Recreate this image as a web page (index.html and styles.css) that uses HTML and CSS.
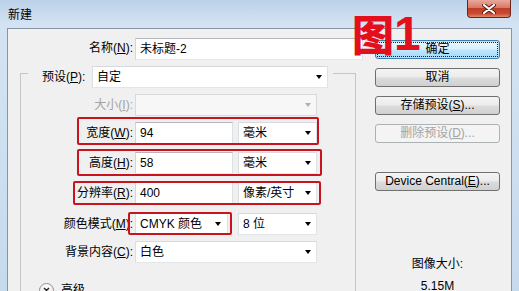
FILE: index.html
```html
<!DOCTYPE html>
<html lang="zh">
<head>
<meta charset="utf-8">
<title>新建</title>
<link rel="stylesheet" href="styles.css">
</head>
<body>
<div class="window">
  <div class="titlebar">
    <span class="title">新建</span>
    <div class="close">
      <svg width="14" height="10" viewBox="0 0 14 10"><path d="M2 1 L12 9 M12 1 L2 9" stroke="#5a1a12" stroke-width="4" stroke-linecap="round"/><path d="M2 1 L12 9 M12 1 L2 9" stroke="#fff" stroke-width="2.2" stroke-linecap="round"/></svg>
    </div>
  </div>
  <div class="client">
    <div class="left">
      <div class="row">
        <span class="lbl lbl-name">名称(<u>N</u>):</span>
        <div class="field f-name">未标题-2</div>
      </div>
      <div class="group">
        <div class="legend">
          <span class="lbl-legend">预设(<u>P</u>):</span>
          <div class="combo c-preset"><span>自定</span><i class="arrow"></i></div>
        </div>
        <div class="row r-size">
          <span class="lbl lbl-grp disabled">大小(<u>I</u>):</span>
          <div class="combo c-full is-disabled"><span></span><i class="arrow arrow-dis"></i></div>
        </div>
        <div class="row r-w">
          <span class="lbl lbl-grp">宽度(<u>W</u>):</span>
          <div class="field f-num">94</div>
          <div class="combo c-unit"><span>毫米</span><i class="arrow"></i></div>
          <div class="mark m1"></div>
        </div>
        <div class="row r-h">
          <span class="lbl lbl-grp">高度(<u>H</u>):</span>
          <div class="field f-num">58</div>
          <div class="combo c-unit"><span>毫米</span><i class="arrow"></i></div>
          <div class="mark m2"></div>
        </div>
        <div class="row r-res">
          <span class="lbl lbl-grp">分辨率(<u>R</u>):</span>
          <div class="field f-num">400</div>
          <div class="combo c-unit"><span>像素/英寸</span><i class="arrow"></i></div>
          <div class="mark m3"></div>
        </div>
        <div class="row r-mode">
          <span class="lbl lbl-grp">颜色模式(<u>M</u>):</span>
          <div class="combo c-mode"><span>CMYK 颜色</span><i class="arrow"></i></div>
          <div class="combo c-bit"><span>8 位</span><i class="arrow"></i></div>
          <div class="mark m4"></div>
        </div>
        <div class="row r-bg">
          <span class="lbl lbl-grp">背景内容(<u>C</u>):</span>
          <div class="combo c-full"><span>白色</span><i class="arrow"></i></div>
        </div>
        <div class="adv">
          <span class="circle">
            <svg width="9" height="9" viewBox="0 0 9 9"><path d="M2 2 L7 7 M7 2 L2 7" stroke="#222" stroke-width="1.4"/></svg>
          </span>
          <span class="adv-label">高级</span>
          <span class="adv-line"></span>
        </div>
      </div>
    </div>
    <div class="right">
      <div class="btn btn-default"><span class="focus">确定</span></div>
      <div class="btn">取消</div>
      <div class="btn">存储预设(<u>S</u>)...</div>
      <div class="btn btn-disabled">删除预设(<u>D</u>)...</div>
      <div class="btn btn-device">Device Central(<u>E</u>)...</div>
      <div class="info">
        <div class="info-label">图像大小:</div>
        <div class="info-value">5.15M</div>
      </div>
    </div>
  </div>
  <div class="tag"><span class="tag-cn">图</span><span class="tag-num">1</span></div>
</div>
</body>
</html>
```

FILE: styles.css
```css
html, body {
  margin: 0;
  padding: 0;
}
body {
  width: 519px;
  height: 291px;
  overflow: hidden;
  font-family: "Liberation Sans", "Noto Sans CJK SC", sans-serif;
  font-size: 12px;
  color: #000;
}
u {
  text-decoration: underline;
  text-underline-offset: 1px;
}
.window {
  position: relative;
  width: 519px;
  height: 291px;
  box-sizing: border-box;
  padding: 0 7px 0 7px;
  display: flex;
  flex-direction: column;
  overflow: hidden;
  background: linear-gradient(to bottom, #bcd2e9 0px, #d3e3f3 24px, #cfe0f1 120px, #c6daee 291px);
}
.titlebar {
  height: 28px;
  flex: none;
  display: flex;
  align-items: flex-start;
}
.title {
  margin: 7px 0 0 1px;
  line-height: 16px;
  font-size: 12px;
}
.close {
  margin-left: auto;
  margin-right: 1px;
  width: 44px;
  height: 18px;
  box-sizing: border-box;
  border: 1px solid #6d2419;
  border-top: none;
  border-radius: 0 0 4px 4px;
  background: linear-gradient(to bottom, #e9a99c 0%, #d77967 45%, #c23c26 50%, #c94a33 80%, #e08a6e 100%);
  display: flex;
  align-items: center;
  justify-content: center;
}
.client {
  flex: 1;
  background: #f0f0f0;
  border: 1px solid #8795a5;
  border-bottom: none;
  display: flex;
}
.left {
  width: 357px;
  flex: none;
  padding-top: 8px;
}
.right {
  width: 125px;
  margin-left: 10px;
  padding-top: 11px;
  display: flex;
  flex-direction: column;
}
.row {
  position: relative;
  display: flex;
  align-items: center;
  height: 22px;
}
.lbl {
  text-align: right;
  line-height: 22px;
  margin-right: 2px;
  white-space: nowrap;
}
.lbl-name {
  width: 125px;
}
.lbl-grp {
  width: 112px;
}
.disabled {
  color: #a3a3a3;
}
.field, .combo {
  height: 22px;
  box-sizing: border-box;
  background: #fff;
  border: 1px solid;
  border-color: #b3b7bd #dde1e6 #e6ebef #d2d6db;
  line-height: 20px;
  padding-left: 4px;
  white-space: nowrap;
}
.combo {
  display: flex;
  align-items: center;
  justify-content: space-between;
  padding-right: 5px;
  border-color: #d6d9dd #dfe2e5 #e3e6e9 #dcdfe2;
}
.arrow {
  width: 0;
  height: 0;
  border-left: 3.5px solid transparent;
  border-right: 3.5px solid transparent;
  border-top: 4px solid #000;
}
.arrow-dis {
  border-top-color: #b0b0b0;
}
.is-disabled {
  background: #f7f7f7;
  border-color: #d9d9d9;
}
.f-name {
  width: 228px;
  margin-top: 1px;
}
.group {
  margin: 14px 0 0 12px;
  width: 336px;
  height: 240px;
  box-sizing: border-box;
  border: 1px solid #c3c6ca;
  border-bottom: none;
}
.legend {
  display: flex;
  align-items: center;
  width: fit-content;
  height: 22px;
  margin: -8px 0 0 7px;
  padding: 0 5px 0 14px;
  background: #f0f0f0;
}
.lbl-legend {
  width: 50px;
  line-height: 22px;
  white-space: nowrap;
}
.c-preset {
  width: 236px;
}
.c-full {
  width: 182px;
}
.f-num {
  width: 98px;
}
.c-unit {
  width: 79px;
  margin-left: 5px;
}
.c-mode {
  width: 93px;
  padding-right: 6px;
}
.c-bit {
  width: 79px;
  margin-left: 10px;
}
.r-size { margin-top: 6px; }
.r-w { margin-top: 6px; }
.r-h { margin-top: 8px; }
.r-res { margin-top: 8px; }
.r-mode { margin-top: 9px; }
.r-bg { margin-top: 6px; }

.mark {
  position: absolute;
  box-sizing: border-box;
  border: 2px solid #c8141e;
  border-radius: 2px;
  pointer-events: none;
}
.m1 { left: 56px; top: -5px; width: 242px; height: 28px; }
.m2 { left: 56px; top: -3px; width: 245px; height: 27px; }
.m3 { left: 52px; top: -1px; width: 248px; height: 24px; }
.m4 { left: 107px; top: -1px; width: 104px; height: 23px; }

.adv {
  display: flex;
  align-items: center;
  margin-top: 19px;
  padding-left: 18px;
  height: 16px;
}
.circle {
  width: 15px;
  height: 15px;
  box-sizing: border-box;
  border: 1px solid #8c8c8c;
  border-radius: 50%;
  background: linear-gradient(#ffffff, #e3e3e3);
  display: flex;
  align-items: center;
  justify-content: center;
}
.adv-label {
  margin-left: 7px;
  line-height: 16px;
}
.adv-line {
  width: 219px;
  height: 1px;
  margin-left: 3px;
  margin-top: 4px;
  background: #b9bcc0;
  box-shadow: 0 1px 0 #fff;
}

.btn {
  height: 19px;
  box-sizing: border-box;
  border: 1px solid #707070;
  border-radius: 3px;
  background: linear-gradient(to bottom, #f4f4f4 0%, #ebebeb 48%, #dcdcdc 52%, #d0d0d0 100%);
  text-align: center;
  line-height: 17px;
  margin-bottom: 9px;
  white-space: nowrap;
}
.btn-default {
  border-color: #3c7fb1;
  background: linear-gradient(to bottom, #eaf6fd 0%, #d9f0fc 48%, #bee6fd 52%, #a7d9f5 100%);
  box-shadow: inset 0 0 0 1px #b8e2f8;
  padding: 1px;
}
.focus {
  display: block;
  height: 15px;
  line-height: 15px;
  outline: 1px dotted #222;
  outline-offset: -1px;
}
.btn-disabled {
  color: #a3a3a3;
  border-color: #adb2b5;
  background: #f4f4f4;
}
.btn-device {
  margin-top: 20px;
}
.info {
  margin-top: 56px;
  text-align: center;
}
.info-label {
  line-height: 16px;
}
.info-value {
  margin-top: 6px;
  line-height: 16px;
}
.tag {
  position: absolute;
  left: 352px;
  top: 10px;
  display: flex;
  align-items: flex-end;
  color: #e3101c;
  font-weight: bold;
  line-height: 1;
}
.tag-cn {
  font-family: "Noto Sans CJK SC", sans-serif;
  font-size: 42px;
  font-weight: 900;
}
.tag-num {
  font-family: "Liberation Sans", sans-serif;
  font-size: 48px;
  margin-left: 0px;
  margin-bottom: -4px;
}
```
